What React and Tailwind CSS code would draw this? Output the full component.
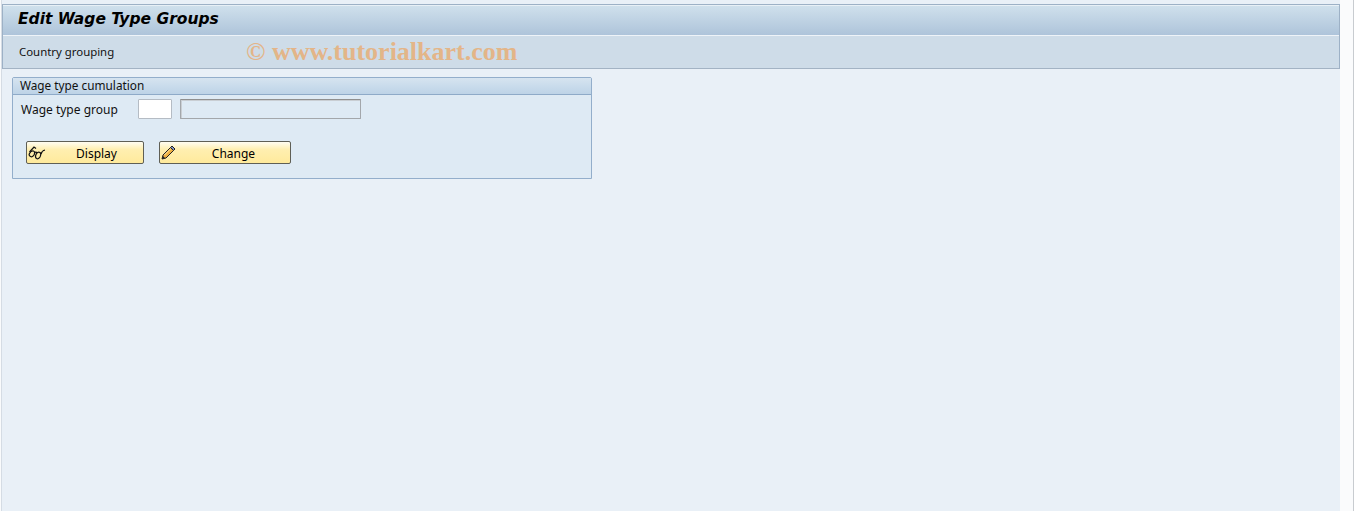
import React from 'react';

function GlassesIcon() {
    return (
        <svg width="18" height="14" viewBox="0 0 18 14" fill="none" stroke="#111" strokeWidth="1.25">
            <path d="M1.5 6 L6 1 L8 2.5"/>
            <path d="M1.5 7.5 Q3 4.5 5.5 5 Q7.5 6 6 9 Q4.5 11.5 2.5 10.5 Q0.5 9.5 1.5 7.5 Z"/>
            <path d="M8.5 7.5 Q10 5.5 12 6.5 Q13.5 8 12 11 Q10.5 13.5 8.5 12.5 Q6.5 11 8.5 7.5 Z"/>
            <path d="M6.5 6.5 Q8 5.5 9 7"/>
            <path d="M13 8 Q14 4.5 17 4"/>
        </svg>
    );
}

function PencilIcon() {
    return (
        <svg width="15" height="15" viewBox="0 0 15 15">
            <path d="M1 14 L2 10 L9.5 2.5 L12.5 5.5 L5 13 Z" fill="#f0b040" stroke="#222" strokeWidth="1"/>
            <path d="M3.5 10 L10 3.5" stroke="#fde9a8" strokeWidth="1"/>
            <path d="M9.5 2.5 L11 1 L14 4 L12.5 5.5 Z" fill="#7f8fc0" stroke="#222" strokeWidth="1"/>
            <path d="M1 14 L2 11 L4 13 Z" fill="#222"/>
        </svg>
    );
}

function SapButton({ icon, label, width, pad }) {
    return (
        <button className={`${width} h-[23px] flex items-center border border-[#5f5f55] rounded-[2px] bg-gradient-to-b from-[#fffdf2] via-[#ffefb0] via-35% to-[#ffea9c] text-[12px] text-black`}>
            <span className="w-[19px] pl-[1px] flex items-center">{icon}</span>
            <span className={`flex-1 text-center pt-[3px] ${pad}`}>{label}</span>
        </button>
    );
}

export default function App() {
    return (
        <div className="w-[1354px] h-[511px] overflow-hidden bg-[#fafbfc] border-r border-[#c8ccd0] font-['Noto_Sans','Liberation_Sans',sans-serif] text-[#111]">
            <div className="w-[1339px] h-full ml-[1px] pt-[4px] bg-[#e9f0f7] border-l border-[#d5dce4] flex flex-col relative">
                <div className="border border-[#9db1c6] border-b-[#a3b3c4]">
                    <div className="h-[31px] flex items-center pl-[15px] pb-[2px] bg-gradient-to-b from-[#cfe0ec] to-[#aec4da] border-t border-[#e8f0f6] border-b border-b-[#eef3f8]">
                        <span className="font-['DejaVu_Sans',sans-serif] text-[15.5px] font-bold italic text-black">Edit Wage Type Groups</span>
                    </div>
                    <div className="h-[32px] flex items-center pl-[16px] bg-[#cedce8] text-[11.4px]">
                        Country grouping
                    </div>
                </div>

                <span className="absolute left-[244px] top-[37px] font-['Liberation_Serif',serif] font-bold text-[26px] leading-[30px] text-[#e3b588]">
                    © www.tutorialkart.com
                </span>

                <div className="w-[580px] h-[102px] mt-[8px] ml-[10px] border border-[#93aecb] rounded-tl-[2px] rounded-tr-[2px] bg-[#deeaf4] flex flex-col">
                    <div className="h-[17px] flex items-center pl-[7px] text-[11.8px] bg-gradient-to-b from-[#d6e4f0] to-[#bdd3e7] border-b border-[#8eaac8]">
                        Wage type cumulation
                    </div>
                    <div className="flex items-center h-[20px] mt-[4px] pl-[8px] text-[12px]">
                        <span className="w-[117px] pt-[2px]">Wage type group</span>
                        <div className="w-[34px] h-[20px] bg-white border border-[#b5bcc4] rounded-[1px]"></div>
                        <div className="w-[181px] h-[20px] ml-[8px] bg-[#deeaf4] border border-[#a3a7ab] border-t-[#8f8f8f] rounded-[1px] shadow-[inset_1px_1px_0_#c9ced3]"></div>
                    </div>
                    <div className="flex gap-[15px] mt-[22px] ml-[13px]">
                        <SapButton icon={<GlassesIcon/>} label="Display" width="w-[118px]" pad="pl-[4px]"/>
                        <SapButton icon={<PencilIcon/>} label="Change" width="w-[132px]" pad="pr-[2px]"/>
                    </div>
                </div>
            </div>
        </div>
    );
}
